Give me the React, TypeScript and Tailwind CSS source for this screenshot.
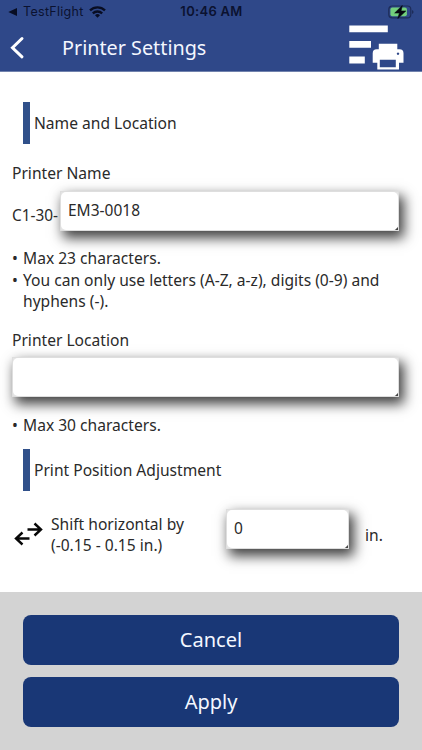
import React from "react";

function StatusBar() {
  return (
    <div className="grid h-6 grid-cols-3 items-center px-2 font-['Inter','Liberation_Sans',sans-serif] text-[13px] text-[#0b1230]">
      <div className="flex items-center">
        <svg width="9" height="8" viewBox="0 0 9 8"><path d="M0.3 4 9 0v8z" fill="#080d22" /></svg>
        <span className="ml-[6px] w-[62px] whitespace-nowrap text-[12.5px] tracking-[0.3px]">TestFlight</span>
        <svg className="ml-[4px] shrink-0" width="17" height="12" viewBox="0 0 17 12" fill="none" stroke="#080d22" strokeWidth="2.3">
          <path d="M1 4.4a10.8 10.8 0 0 1 15 0" />
          <path d="M3.8 7.4a6.8 6.8 0 0 1 9.4 0" />
          <path d="M8.5 11.8 6 9.3a3.6 3.6 0 0 1 5 0z" fill="#080d22" stroke="none" />
        </svg>
      </div>
      <div className="pl-px whitespace-nowrap text-center text-[13px] font-semibold tracking-[0.3px]">10:46 AM</div>
      <div className="flex justify-end">
        <svg width="26" height="14" viewBox="0 0 26 14">
          <rect x="0.8" y="1" width="22" height="11.8" rx="3.4" fill="none" stroke="#1d2c58" strokeWidth="1.2" />
          <rect x="2.4" y="2.6" width="16.500" height="8.6" rx="2" fill="#72cf7c" />
          <path d="M24 5v4c1.2-.5 1.5-1.2 1.5-2s-.3-1.500-1.500-2z" fill="#1d2c58" />
          <path d="M14.300.5 6.700 8h4.700l-1.600 5.500L17.800 6h-4.800z" fill="#05080f" stroke="#05080f" strokeWidth=".6" />
        </svg>
      </div>
    </div>
  );
}

function PrinterQueueIcon() {
  return (
    <svg width="56" height="46" viewBox="0 0 56 46" fill="#fff">
      <path d="M.3 1.500h38.500v6.800H.3zM.3 17h21.700v6.800H.3zM.3 32.600h15.500v6.800H.3z" />
      <path fillRule="evenodd" d="M29.800 19.800h18.500v5.500h2.200q4 0 4 4v9.500h-4.500v6.700H28.300V38.800h-4.600v-9.500q0-4 4-4h2.100zM30.800 35.800v7.400h16V35.800zM49 28.500a1.200 1.200 0 1 0 .01 0z" />
    </svg>
  );
}

function SectionHeading({ children }: { children: React.ReactNode }) {
  return (
    <h2 className="ml-[11px] flex h-[42px] items-center border-l-[7px] border-[#30508a] pt-[2px] pl-[4px] text-[15.6px]">{children}</h2>
  );
}

function Field({ value, className }: { value: string; className: string }) {
  return (
    <div className={`h-10 border border-[#dedede] bg-[#e4e4e4] shadow-[4px_6px_12px_1px_#404040] ${className}`}>
      <div className="relative flex h-full items-center rounded-[5px] bg-white pl-[7px] text-[15.5px]">
        {value}
        <svg className="absolute right-0 bottom-0" width="3" height="3"><path d="M3 0v3H0z" fill="#444" /></svg>
      </div>
    </div>
  );
}

function Bullet({ children }: { children: React.ReactNode }) {
  return (
    <li className="flex">
      <span className="w-[11px] shrink-0">•</span>
      <span className="whitespace-nowrap">{children}</span>
    </li>
  );
}

export default function App() {
  return (
    <div className="flex h-[750px] w-[422px] flex-col overflow-hidden bg-white font-['Noto_Sans','Open_Sans',sans-serif] text-[15.6px] leading-[21.6px] text-[#2a2a2a]">
      <header className="h-[72px] shrink-0 border-b border-[#7182ad] bg-[#2f4889]">
        <StatusBar />
        <div className="flex h-[47px] items-start">
          <svg className="mt-[12px] ml-[10px]" width="15" height="23" viewBox="0 0 15 23" fill="none" stroke="#fff" strokeWidth="3" strokeLinecap="round">
            <path d="M12 2.500 2.500 11.800l9.500 9" />
          </svg>
          <h1 className="mt-[10px] ml-[37px] w-[287px] text-[19.8px] leading-[28px] text-[#f4f7ff]">Printer Settings</h1>
          <PrinterQueueIcon />
        </div>
      </header>

      <main className="h-[520px] shrink-0 pt-[30px] pr-[22px] pl-[12px]">
        <SectionHeading>Name and Location</SectionHeading>
        <div className="mt-[19px] h-[22px]">Printer Name</div>
        <div className="mt-[6px] flex h-10">
          <span className="w-[48px] pt-[14px] text-[15.4px] whitespace-nowrap">C1-30-</span>
          <Field value="EM3-0018" className="w-[339px]" />
        </div>
        <ul className="mt-[17px]">
          <Bullet>Max 23 characters.</Bullet>
          <Bullet>You can only use letters (A-Z, a-z), digits (0-9) and<br />hyphens (-).</Bullet>
        </ul>
        <div className="mt-[17px] h-[22px]">Printer Location</div>
        <Field value="" className="mt-[5px] w-[387px]" />
        <ul className="mt-[18px] mb-[12px] h-[22px]"><Bullet>Max 30 characters.</Bullet></ul>
        <SectionHeading>Print Position Adjustment</SectionHeading>
        <div className="mt-[18px] flex">
          <svg className="mt-[12px] ml-[2px] shrink-0" width="29" height="26" viewBox="0 0 29 26" fill="none" stroke="#080808" strokeWidth="2.4">
            <path d="M13.500 8.500H27M20.500 2.500 27 8.500l-6.500 6M15.500 17.500H2M8.500 11.500 2 17.500l6.500 6" />
          </svg>
          <div className="mt-[5px] ml-[8px] w-[175px] whitespace-nowrap">Shift horizontal by<br />(-0.15 - 0.15 in.)</div>
          <Field value="0" className="w-[123px]" />
          <span className="mt-[16px] ml-[16px]">in.</span>
        </div>
      </main>

      <footer className="flex flex-1 flex-col gap-[12px] bg-[#d3d3d3] px-[23px] pt-[23px] text-[20px] text-[#f4f7ff]">
        <button className="h-[50px] w-[376px] rounded-[8px] bg-[#193776]">Cancel</button>
        <button className="h-[50px] w-[376px] rounded-[8px] bg-[#193776]">Apply</button>
      </footer>
    </div>
  );
}
